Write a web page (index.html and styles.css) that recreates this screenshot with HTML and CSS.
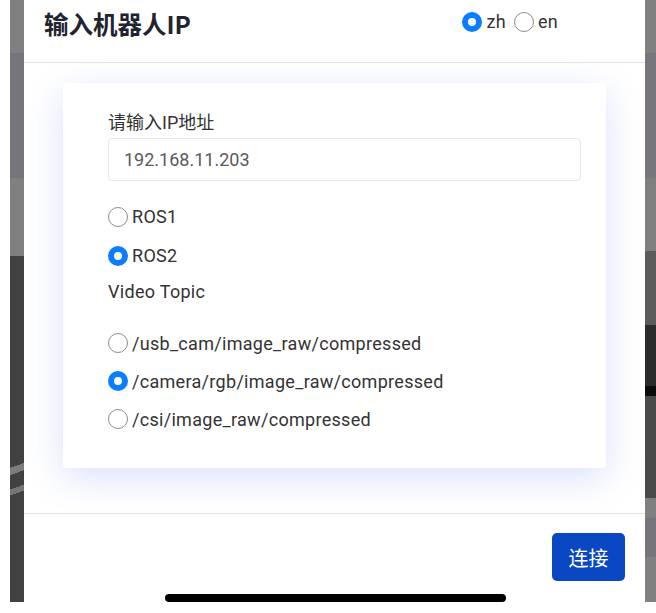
FILE: index.html
```html
<!DOCTYPE html>
<html lang="zh">
<head>
<meta charset="utf-8">
<title>输入机器人IP</title>
<link rel="stylesheet" href="styles.css">
</head>
<body>
<div class="screen">
  <div class="strip strip-left"></div>
  <div class="modal">
    <header class="modal-header">
      <h1 class="modal-title">输入机器人IP</h1>
      <div class="lang">
        <label class="opt"><input type="radio" name="lang" class="radio" checked><span>zh</span></label>
        <label class="opt"><input type="radio" name="lang" class="radio"><span>en</span></label>
      </div>
    </header>
    <main class="modal-body">
      <div class="card">
        <div class="field-label">请输入IP地址</div>
        <input class="ip-input" type="text" value="192.168.11.203">
        <div class="group group-ros">
          <label class="row"><input type="radio" name="ros" class="radio"><span>ROS1</span></label>
          <label class="row"><input type="radio" name="ros" class="radio" checked><span>ROS2</span></label>
        </div>
        <div class="section-label">Video Topic</div>
        <div class="group group-topic">
          <label class="row"><input type="radio" name="topic" class="radio"><span>/usb_cam/image_raw/compressed</span></label>
          <label class="row"><input type="radio" name="topic" class="radio" checked><span>/camera/rgb/image_raw/compressed</span></label>
          <label class="row"><input type="radio" name="topic" class="radio"><span>/csi/image_raw/compressed</span></label>
        </div>
      </div>
    </main>
    <footer class="modal-footer">
      <button class="btn-connect" type="button">连接</button>
    </footer>
  </div>
  <div class="strip strip-right"></div>
  <div class="home-indicator"></div>
</div>
</body>
</html>
```

FILE: styles.css
```css
* { box-sizing: border-box; }

html, body {
  margin: 0;
  padding: 0;
  background: #ffffff;
  font-family: Roboto, "Noto Sans CJK SC", "Noto Sans", sans-serif;
  color: #333333;
}

.screen {
  position: relative;
  display: flex;
  height: 613px;
  padding-left: 10px;
  align-items: flex-start;
}

.strip {
  height: 602px;
  flex: none;
}

.strip-left {
  width: 14px;
  background:
    linear-gradient(160deg, transparent 0 40%, rgba(150,150,150,0.7) 40% 46%, transparent 46% 58%, rgba(140,140,140,0.7) 58% 63%, transparent 63%) 0 420px / 14px 115px no-repeat,
    linear-gradient(to bottom,
      #808080 0 53px,
      #75757b 53px 178px,
      #808080 178px 256px,
      #414141 256px 602px);
}

.strip-right {
  width: 11px;
  background: linear-gradient(to bottom,
    #808080 0 53px,
    #76767c 53px 178px,
    #808080 178px 251px,
    #5c5c5c 251px 325px,
    #2b2b2b 325px 386px,
    #0b0b0b 386px 396px,
    #4a4a4a 396px 498px,
    #808080 498px 518px,
    #75757b 518px 557px,
    #808080 557px 602px);
}

.modal {
  width: 621px;
  flex: none;
  height: 602px;
  background: #ffffff;
  border-radius: 0 0 5px 5px;
  display: flex;
  flex-direction: column;
}

.modal-header {
  height: 63px;
  display: flex;
  justify-content: space-between;
  align-items: flex-start;
  padding: 7px 87px 0 20px;
  border-bottom: 1px solid #e4e4e8;
}

.modal-title {
  margin: 0;
  font-size: 24.5px;
  line-height: 33px;
  font-weight: 700;
  color: #1f2430;
  font-family: "Noto Sans CJK SC", Roboto, sans-serif;
}

.lang {
  display: flex;
  gap: 8px;
  margin-top: 3px;
}

.opt {
  display: flex;
  align-items: center;
  gap: 4px;
  font-size: 18px;
  line-height: 24px;
  letter-spacing: 0.3px;
  color: #333333;
}

.radio {
  appearance: none;
  -webkit-appearance: none;
  margin: 0;
  width: 20px;
  height: 20px;
  border-radius: 50%;
  border: 1.5px solid #8d8d8d;
  background: #ffffff;
  flex: none;
}

.radio:checked {
  border: 6px solid #0b7dff;
  background: #ffffff;
}

.modal-body {
  padding: 20px 39px 45px;
}

.card {
  height: 385px;
  background: #ffffff;
  border-radius: 4px;
  padding: 26px 25px 0 45px;
  box-shadow: 0 10px 36px rgba(70, 100, 235, 0.2);
}

.field-label {
  font-size: 18px;
  line-height: 27px;
  color: #333333;
  margin-bottom: 2px;
}

.ip-input {
  display: block;
  width: 100%;
  height: 43px;
  border: 1px solid #e6e6e6;
  border-radius: 4px;
  padding: 0 15px;
  font: inherit;
  font-size: 18px;
  color: #5a5a5a;
  background: #ffffff;
  outline: none;
}

.group {
  display: flex;
  flex-direction: column;
}

.group-ros {
  margin-top: 16px;
}

.row {
  display: flex;
  align-items: center;
  gap: 4px;
  height: 39px;
  font-size: 18px;
  letter-spacing: 0.3px;
  color: #333333;
}

.group-topic .row {
  height: 38px;
}

.section-label {
  font-size: 18px;
  line-height: 34px;
  letter-spacing: 0.3px;
  color: #333333;
}

.group-topic {
  margin-top: 15px;
}

.modal-footer {
  border-top: 1px solid #e4e4e8;
  display: flex;
  justify-content: flex-end;
  padding: 19px 20px 0;
}

.btn-connect {
  width: 73px;
  height: 48px;
  border: none;
  border-radius: 5px;
  background: #0a47c3;
  color: #ffffff;
  font-family: "Noto Sans CJK SC", sans-serif;
  font-size: 20px;
  padding: 0;
}

.home-indicator {
  position: absolute;
  left: 165px;
  top: 594px;
  width: 341px;
  height: 8px;
  border-radius: 4px;
  background: #000000;
}
```
